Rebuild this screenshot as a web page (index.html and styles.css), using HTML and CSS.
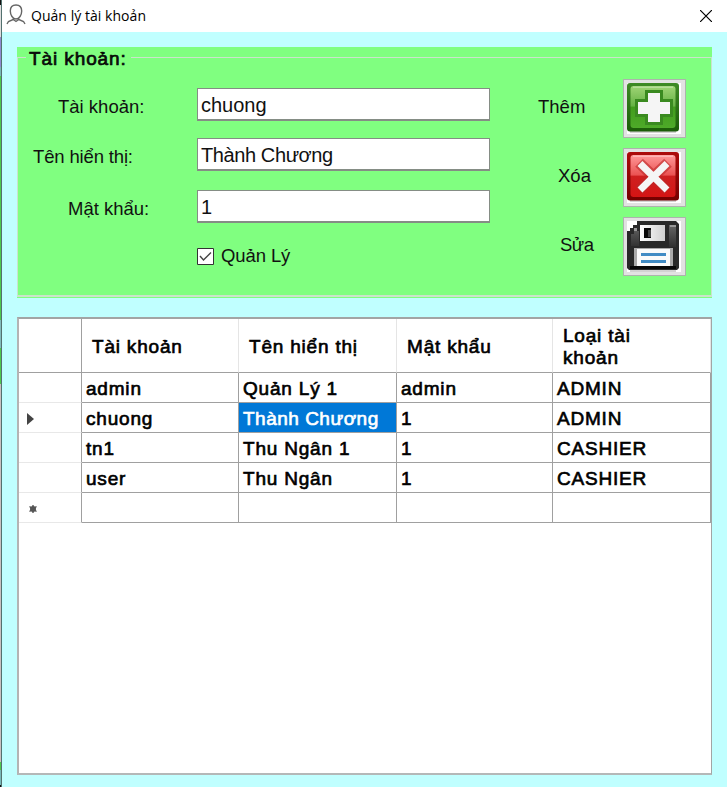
FILE: index.html
```html
<!DOCTYPE html>
<html lang="vi">
<head>
<meta charset="utf-8">
<title>Quản lý tài khoản</title>
<link rel="stylesheet" href="styles.css">
</head>
<body>
<div class="edge"></div>
<div class="window">
  <header class="titlebar">
    <svg class="app-icon" width="20" height="21" viewBox="0 0 20 21" fill="none" stroke="#666" stroke-width="1.4"><path d="M10 1C6 1 4.300 3.500 4.300 7c0 4 2.500 8 5.700 8s5.700-4 5.700-8c0-3.500-1.700-6-5.700-6zM7.300 13.500v2L2.500 17.500 1 20M12.700 13.500v2l4.800 2L19 20M7.300 15.500 10 17.500l2.700-2"/></svg>
    <h1 class="title">Quản lý tài khoản</h1>
    <svg class="close" width="12" height="12" viewBox="0 0 12 12" stroke="#000" stroke-width="1.200"><path d="M0 0 12 12M12 0 0 12"/></svg>
  </header>
  <main class="content">
    <section class="group">
      <div class="frame"></div>
      <h2 class="legend">Tài khoản:</h2>
      <div class="form">
        <div class="fields">
          <div class="field"><label class="lab-account">Tài khoản:</label><div class="input">chuong</div></div>
          <div class="field"><label class="lab-name">Tên hiển thị:</label><div class="input name">Thành Chương</div></div>
          <div class="field"><label class="lab-pass">Mật khẩu:</label><div class="input">1</div></div>
          <div class="check"><svg width="17" height="17" viewBox="0 0 17 17"><path fill="#fff" stroke="#333" d="M.5.500h16v16H.5z"/><path d="m3 8 3.500 4L14 4.500" fill="none" stroke="#444" stroke-width="1.400"/></svg><span>Quản Lý</span></div>
        </div>
        <div class="actions">
          <div class="action"><span class="act-add">Thêm</span>
            <div class="button"><svg width="54" height="51" viewBox="0 0 54 51">
              <defs><linearGradient id="g" x2="0" y2="1"><stop stop-color="#9fd475"/><stop offset=".48" stop-color="#65b244"/><stop offset=".5" stop-color="#419c1c"/><stop offset="1" stop-color="#4eaa29"/></linearGradient><linearGradient id="ge" x2="0" y2="1"><stop stop-color="#3e8b25"/><stop offset="1" stop-color="#1b5c08"/></linearGradient></defs>
              <path fill="#fff" d="M0 0h54v51H0z"/><path fill="#d2d2d2" d="M3 48h46v2H3z"/>
              <rect width="52" height="48.500" rx="3" fill="url(#ge)"/><rect x="3.500" y="3" width="45" height="42" rx="3" fill="url(#g)"/>
              <path fill="#b5de98" d="M6 3.500h40v1.500H6z"/><path fill="#3a8a20" d="M18 7h18v9h10v18H36v8H18v-8H8V16h10z"/><path fill="#f5f5f5" d="M21 10h12v9h10v12H33v8H21v-8H11V19h10z"/></svg></div>
          </div>
          <div class="action"><span class="act-delete">Xóa</span>
            <div class="button"><svg width="54" height="51" viewBox="0 0 54 51">
              <defs><linearGradient id="r" x2="0" y2="1"><stop stop-color="#f99"/><stop offset=".48" stop-color="#ea5252"/><stop offset=".5" stop-color="#ce2020"/><stop offset="1" stop-color="#d51414"/></linearGradient><linearGradient id="re" x2="0" y2="1"><stop stop-color="#ad0b0b"/><stop offset="1" stop-color="#750000"/></linearGradient></defs>
              <path fill="#fff" d="M0 0h54v51H0z"/><path fill="#d2d2d2" d="M3 48h46v2H3z"/>
              <rect width="52" height="48.500" rx="3" fill="url(#re)"/><rect x="3.500" y="3" width="45" height="42" rx="3" fill="url(#r)"/><path fill="#ffb5b5" d="M6 3.500h40v1.500H6z"/>
              <path fill="none" stroke="#bd2828" stroke-opacity=".6" stroke-width="11" stroke-linecap="square" d="m16 14.500 21 20M37 14.500l-21 20"/><path fill="none" stroke="#f5f5f5" stroke-width="7" stroke-linecap="square" d="m15.500 14 22 21.500M37.500 14l-22 21.500"/></svg></div>
          </div>
          <div class="action"><span class="act-edit">Sửa</span>
            <div class="button"><svg width="54" height="51" viewBox="0 0 54 51">
              <defs><linearGradient id="m"><stop stop-color="#fff"/><stop offset="1" stop-color="#cfcfcf"/></linearGradient><linearGradient id="k" x2="0" y2="1"><stop stop-color="#666"/><stop offset="1" stop-color="#303030"/></linearGradient></defs>
              <path fill="#fff" d="M0 0h54v51H0z"/><path fill="#d2d2d2" d="M3 48h46v3H3z"/>
              <path fill="#292929" d="M10 0h39l3 3v44l-2 2H2l-2-2V10h3V7h3V4h4z"/><path fill="url(#k)" d="M4 13h3v-3h5v15H4zM42 4h7v22h-7z"/><path fill="#999" d="M7 7h3v3H7zM43 4h6v2h-6z"/>
              <path fill="url(#m)" d="M13 4h25v16H13z"/><path fill="#090909" d="M17 7h7v10h-7z"/><path fill="#444" d="M21 9h3v7h-3z"/>
              <path fill="#aaa" d="M7 27h39v18H7z"/><path fill="#fafafa" d="M10 28h33v17H10z"/><path fill="#418bc4" d="M14 32h25v3H14zM14 39h25v3H14z"/><path fill="#080808" d="M3 45h46v3H3z"/></svg></div>
          </div>
        </div>
      </div>
    </section>
    <section class="grid-view">
      <div class="row head"><div></div><div>Tài khoản</div><div>Tên hiển thị</div><div>Mật khẩu</div><div>Loại tài khoản</div></div>
      <div class="row"><div></div><div>admin</div><div>Quản Lý 1</div><div>admin</div><div>ADMIN</div></div>
      <div class="row"><div class="marker"><svg width="7" height="12" viewBox="0 0 7 12"><path fill="#444" d="M0 0 7 6 0 12z"/></svg></div><div>chuong</div><div class="selected">Thành Chương</div><div>1</div><div>ADMIN</div></div>
      <div class="row"><div></div><div>tn1</div><div>Thu Ngân 1</div><div>1</div><div>CASHIER</div></div>
      <div class="row"><div></div><div>user</div><div>Thu Ngân</div><div>1</div><div>CASHIER</div></div>
      <div class="row"><div class="marker new"><svg width="8" height="8" viewBox="0 0 8 8"><path stroke="#555" stroke-width="1.400" d="M4 0v8M.5 1.500l7 5M7.500 1.500l-7 5"/><circle cx="4" cy="4" r="3" fill="#555"/></svg></div><div></div><div></div><div></div><div></div></div>
    </section>
  </main>
</div>
</body>
</html>
```
FILE: styles.css
```css
* { box-sizing: border-box; }
body { margin: 0; width: 727px; height: 787px; display: flex; overflow: hidden; font-family: "Liberation Sans", Arial, sans-serif; font-size: 18.5px; color: #111; }
.edge { flex: none; width: 2px; border-right: 1px solid #53716f; background: linear-gradient(#111 0 5px, #ddd 5px 37px, #8f89d0 37px 67px, #78b8b8 67px 76px, #4dc94d 76px 320px, #82bcbc 320px 348px, #4dc94d 348px 384px, #c9c1c1 384px 762px, #4dc94d 762px 770px, #78b8b8 770px 785px, #111 785px); }
.window { flex: 1; min-width: 0; background: #c0ffff; }
.titlebar { height: 32px; background: #fff; display: flex; align-items: center; padding: 0 15px 0 4px; }
.app-icon { margin-top: -3px; }
.title { margin: -1px auto 0 5px; font: 400 14px "Open Sans", "Noto Sans", sans-serif; letter-spacing: 0.04px; color: #000; }
.content { padding: 15px 15px 0; }
.group { position: relative; height: 251px; background: #80ff80; }
.frame { position: absolute; inset: 10px 0 1px; border: 2px solid #cbe3cb; border-width: 1px 1px 2px; }
.legend { position: absolute; left: 9px; top: 1px; margin: 0; padding: 0 4px 0 3px; height: 22px; background: #80ff80; font-size: 19px; line-height: 22px; font-weight: 400; letter-spacing: .9px; -webkit-text-stroke: .65px #000; }
.form { display: flex; justify-content: space-between; padding: 32px 26px 0 16px; }
.fields { padding-top: 9px; display: grid; grid-template-rows: 50px 52px 56px 20px; }
.field { display: grid; grid-template-columns: 164px 293px; align-items: start; }
.field label { line-height: 37px; }
.lab-account { padding-left: 25px; }
.lab-name { padding-left: 0; letter-spacing: -.15px; }
.lab-pass { padding-left: 35px; }
.input { height: 33px; border: 1px solid #858d85; border-width: 1px 1px 2px 1px; background: #fff; padding-left: 3px; font-size: 20px; line-height: 32px; }
.input.name { letter-spacing: -.4px; }
.check { display: flex; align-items: center; gap: 7px; padding-left: 164px; line-height: 20px; letter-spacing: -.1px; }
.actions { display: grid; grid-template-rows: repeat(3, 59px); row-gap: 10px; }
.action { display: grid; grid-template-columns: 85px 63px; line-height: 56px; }
.act-delete { padding-left: 20px; }
.act-edit { padding-left: 22px; letter-spacing: -.5px; }
.button { height: 59px; border: 1px solid #adb3ad; background: #e2e2e2; padding: 3px 0 0 3px; }
.button svg { display: block; }
.grid-view { margin-top: 19px; height: 458px; border: 2px solid #a2a5a5; border-right-width: 1px; border-left-color: #b4b4b4; border-bottom-color: #b4b8b8; background: #fff; color: #000; }
.row { display: grid; grid-template-columns: 63px 157px 158px 156px 158px; grid-template-rows: 100%; height: 30px; font-size: 19px; letter-spacing: .8px; -webkit-text-stroke: .65px currentColor; line-height: 27px; }
.row > div { border-right: 1px solid #a0a0a0; border-bottom: 1px solid #a0a0a0; padding: 2px 0 0 4px; white-space: nowrap; }
.row > div:first-child { border-bottom-color: #e8e8e8; }
.row.head { height: 54px; line-height: 22px; }
.row.head > div { display: flex; align-items: center; padding: 3px 30px 0 10px; border-right-color: #e5e5e5; white-space: normal; }
.row.head > div:first-child { border-color: #a0a0a0; }
.row > .selected { background: #0078d7; color: #fff; letter-spacing: .5px; }
.row > .marker { display: flex; align-items: center; padding-left: 8px; }
.row > .marker.new { padding: 3px 0 0 10px; }
```
